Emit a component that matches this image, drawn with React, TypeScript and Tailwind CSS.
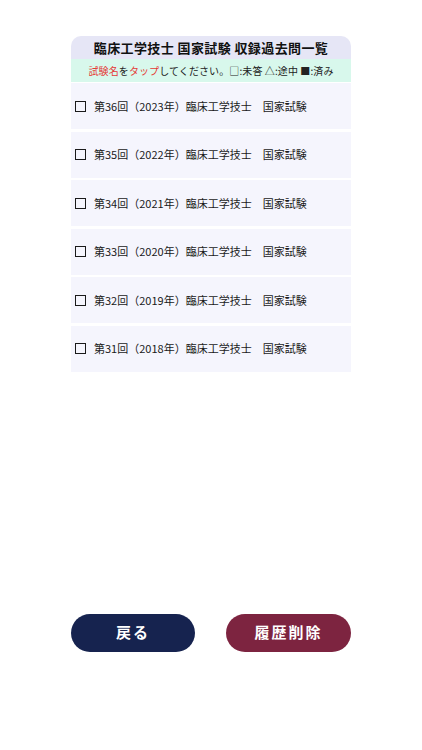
import React from "react";

const items = [
  "第36回（2023年）臨床工学技士　国家試験",
  "第35回（2022年）臨床工学技士　国家試験",
  "第34回（2021年）臨床工学技士　国家試験",
  "第33回（2020年）臨床工学技士　国家試験",
  "第32回（2019年）臨床工学技士　国家試験",
  "第31回（2018年）臨床工学技士　国家試験",
];

export default function App() {
  return (
    <div
      className="w-[422px] h-[750px] bg-white flex flex-col"
      style={{ fontFamily: '"Noto Sans CJK JP", "Noto Sans", sans-serif' }}
    >
      <div className="w-[280px] mx-auto mt-[36px] flex flex-col">
        <div className="h-[23px] bg-[#e6e6f6] rounded-t-[10px] flex items-center justify-center text-[13px] font-bold text-[#111] tracking-[0.4px]">
          臨床工学技士 国家試験 収録過去問一覧
        </div>
        <div className="h-[23px] bg-[#d8f8ec] flex items-center justify-center text-[10px] text-[#222] tracking-[0.1px]">
          <span className="text-[#e53935]">試験名</span>を
          <span className="text-[#e53935]">タップ</span>してください。□:未答 △:途中 ■:済み
        </div>
        <div className="flex flex-col gap-[2.5px] pt-[1px]">
          {items.map((t) => (
            <div
              key={t}
              className="h-[46px] bg-[#f5f5fd] flex items-center pl-[4px] text-[11px] text-[#1a1a1a]"
            >
              <span className="w-[11px] h-[11px] border-[1.5px] border-[#1a1a1a] mr-[8px] shrink-0" />
              <span>{t}</span>
            </div>
          ))}
        </div>
      </div>
      <div className="w-[280px] mx-auto mt-[242px] flex justify-between">
        <button className="w-[124px] h-[38px] rounded-full bg-[#16234f] text-white text-[15px] font-bold tracking-[2px] flex items-center justify-center">
          戻る
        </button>
        <button className="w-[125px] h-[38px] rounded-full bg-[#7d2440] text-white text-[15px] font-bold tracking-[2px] flex items-center justify-center">
          履歴削除
        </button>
      </div>
    </div>
  );
}
